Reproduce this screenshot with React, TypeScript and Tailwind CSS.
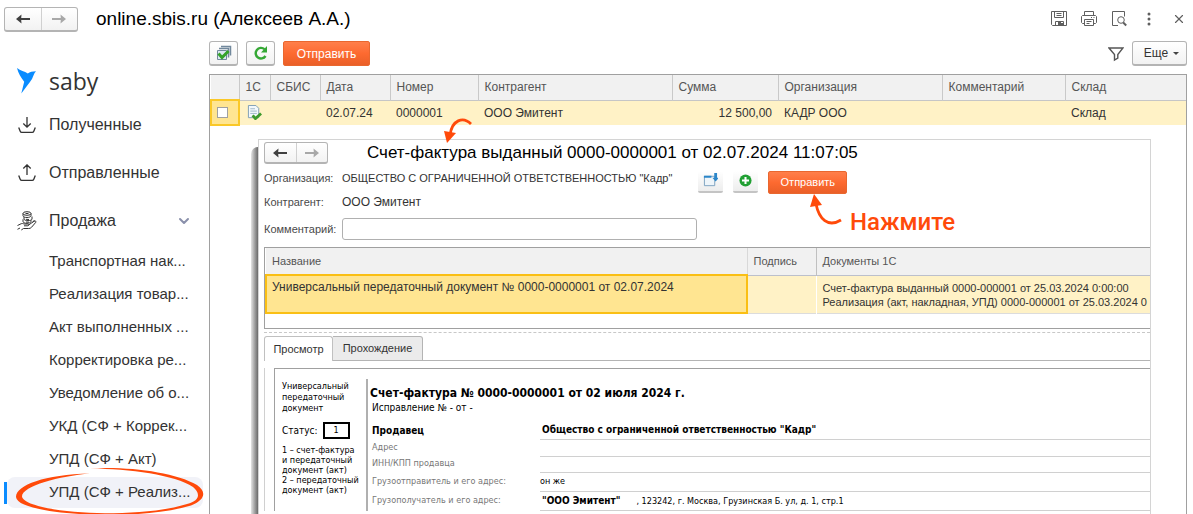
import type { ReactNode } from 'react';
import clsx from 'clsx';
import { ChevronDown, X } from 'lucide-react';

const documentTypes = [
  'Транспортная нак...',
  'Реализация товар...',
  'Акт выполненных ...',
  'Корректировка ре...',
  'Уведомление об о...',
  'УКД (СФ + Коррек...',
  'УПД (СФ + Акт)',
  'УПД (СФ + Реализ...',
];

const columns = [
  { title: '', width: 'w-[28px]' },
  { title: '1С', width: 'w-[31px]' },
  { title: 'СБИС', width: 'w-[50px]' },
  { title: 'Дата', width: 'w-[70px]' },
  { title: 'Номер', width: 'w-[88px]' },
  { title: 'Контрагент', width: '' },
  { title: 'Сумма', width: 'w-[106px]' },
  { title: 'Организация', width: 'w-[164px]' },
  { title: 'Комментарий', width: 'w-[123px]' },
  { title: 'Склад', width: 'w-[121px]' },
];

const parties = [
  { label: 'Адрес', value: '', height: 'h-[17px]' },
  { label: 'ИНН/КПП продавца', value: '', height: 'h-[16px]' },
  { label: 'Грузоотправитель и его адрес:', value: 'он же', height: 'h-[19px]' },
];

const Arrow = ({ back }: { back?: boolean }) => (
  <svg
    viewBox="0 0 14 10"
    className={clsx('h-[10px] w-[14px]', back ? 'text-[#404040]' : 'rotate-180 text-[#a8a8a8]')}
  >
    <path d="M0 5 5.5 0.4 5.2 3.9H14V6.1H5.2L5.5 9.6Z" fill="currentColor" />
  </svg>
);

const HistoryButtons = ({ small }: { small?: boolean }) => (
  <div
    className={clsx(
      'flex shrink-0 divide-x divide-[#d0d0d0] rounded-[3px] border border-b-2 border-[#b4b4b4] bg-gradient-to-b from-white to-[#f2f2f2]',
      small ? 'h-[22px] w-16' : 'h-[25px] w-[74px]'
    )}
  >
    <button aria-label="Назад" className="flex flex-1 items-center justify-center">
      <Arrow back />
    </button>
    <button aria-label="Вперед" className="flex flex-1 items-center justify-center">
      <Arrow />
    </button>
  </div>
);

const SendButton = ({ className }: { className: string }) => (
  <button
    className={clsx(
      'rounded-[2px] border border-[#e9672f] bg-gradient-to-b from-[#ff7f4a] via-[#fd6a30] to-[#ea5f28] text-white',
      className
    )}
  >
    Отправить
  </button>
);

const ToolButton = ({ label, children }: { label: string; children: ReactNode }) => (
  <button
    aria-label={label}
    className="flex h-[25px] w-[29px] items-center justify-center rounded-[3px] border border-b-2 border-[#b4b4b4] bg-gradient-to-b from-white to-[#f2f2f2]"
  >
    {children}
  </button>
);

const TopIcons = () => (
  <div className="flex items-center gap-[14px] text-[#5f5f5f]">
    <button aria-label="Сохранить">
      <svg viewBox="0 0 16 16" className="size-4" fill="none" stroke="currentColor">
        <path d="M.5.5h15v14h-14l-1-1zM3.500.5v6h9v-6M5.500 2.500h5M5.500 4.500h5M4.500 14.500v-4h8v4" />
        <path d="M7 11h3v1h2v2H7z" fill="currentColor" stroke="none" />
      </svg>
    </button>
    <button aria-label="Печать">
      <svg viewBox="0 0 16 16" className="size-4" fill="none" stroke="currentColor">
        <path d="M3.5 4.5v-4h9v4M3.5 12.5h-2l-1-1v-6l1-1h13l1 1v6l-1 1h-2M3.5 8.5h9v6h-9zM5.5 10.500h5M5.5 12.500h3M10 6.5h1M12.5 6.5h1" />
      </svg>
    </button>
    <button aria-label="Просмотр документа">
      <svg viewBox="0 0 16 16" className="size-4" fill="none" stroke="currentColor">
        <path d="M7 14.5H1.5V.5h12v5" />
        <circle cx="10" cy="9" r="3.3" />
        <path d="m12.2 11.500 3 3" strokeWidth="2" />
      </svg>
    </button>
    <button aria-label="Меню">
      <svg viewBox="0 0 16 16" className="size-4" fill="currentColor">
        <circle cx="8" cy="3" r="1.5" />
        <circle cx="8" cy="8" r="1.5" />
        <circle cx="8" cy="13" r="1.5" />
      </svg>
    </button>
    <button aria-label="Закрыть">
      <X className="mx-px size-[14px]" strokeWidth={2} />
    </button>
  </div>
);

const CoinsInHand = () => (
  <svg viewBox="0 0 20 20" className="size-5" fill="none" stroke="currentColor" strokeWidth="1">
    <ellipse cx="10" cy="2.5" rx="4" ry="1.8" />
    <path d="M6 2.5v2.2c0 1 1.800 1.800 4 1.800s4-.8 4-1.800V2.500M7 6v2c0 1 1.800 1.600 4 1.600s4-.6 4-1.600V5.500M6 8.300v2.200c0 1 1.800 1.800 4 1.800s4-.8 4-1.800V9.300M8.500 2.500h3M9 8.300l3 .2M9 11l3 .2" />
    <path d="M.5 14.500 4 12.800c1-.5 2-.3 3 .2h3.500c1.300 0 1.300 1.800 0 1.800H7M11 14.500l5-3.600c2.200-1.300 3.500-.8 2.800.4l-4.300 5c-.8.900-1.700 1.200-2.800 1.200H6.500L4.300 19M.5 18.300 3 17" />
    <path d="M15.500 11.500 17.500 9" />
  </svg>
);

const Sidebar = () => (
  <nav className="w-[209px] shrink-0 text-[15px] text-[#333]">
    <a href="#home" className="ml-4 mt-[27px] flex h-8 items-center gap-3">
      <svg viewBox="0 0 21 26" className="h-[26px] w-[21px] text-[#0a8cff]" fill="currentColor">
        <path d="M1 0C4.500 3 8.500 3.200 11.800 5.500 13.800 4 16.500 3.500 20 3.300 17.600 5.700 17.600 8 16 11 13 16 9 20 5.300 25.600L8.200 13.800C5 9.500 2.200 5 1 0Z" />
      </svg>
      <span className="font-['Open_Sans',sans-serif] text-[23px] leading-7">saby</span>
    </a>
    <a href="#inbox" className="ml-[18px] mt-1 flex h-12 items-center gap-[13px] text-base">
      <svg viewBox="0 0 18 18" className="size-[18px]" fill="none" stroke="currentColor" strokeWidth="1.3">
        <path d="M.7 11.500l1.500 3.700c.3.800.8 1.100 1.600 1.100h10.400c.8 0 1.300-.3 1.600-1.100l1.500-3.700M9 1v10M5.300 7.500 9 11.200l3.700-3.700" />
      </svg>
      Полученные
    </a>
    <a href="#outbox" className="ml-[18px] flex h-12 items-center gap-[13px] text-base">
      <svg viewBox="0 0 18 18" className="size-[18px]" fill="none" stroke="currentColor" strokeWidth="1.3">
        <path d="M.7 11.500l1.500 3.700c.3.800.8 1.100 1.600 1.100h10.400c.8 0 1.300-.3 1.600-1.100l1.500-3.700M9 11V1M5.300 4.500 9 .9l3.700 3.600" />
      </svg>
      Отправленные
    </a>
    <button className="flex h-12 w-full items-center px-[17px] text-base">
      <CoinsInHand />
      <span className="ml-3 flex-1 text-left">Продажа</span>
      <ChevronDown className="size-4 text-[#8a90ab]" strokeWidth={3} />
    </button>
    <ul>
      {documentTypes.map((title, i) => {
        const active = i === documentTypes.length - 1;
        return (
          <li key={title} className="flex h-[33px] items-center pl-1">
            <span className={clsx('h-[22px] w-[3px]', active && 'bg-[#0a8cff]')} />
            <a
              href="#documents"
              className={clsx(
                'relative mr-[6px] flex h-[31px] flex-1 items-center whitespace-nowrap rounded-lg pl-[42px]',
                active && 'bg-[#f1f2f8]'
              )}
            >
              {title}
              {active && (
                <svg
                  viewBox="0 0 190 50"
                  className="absolute -top-[10px] left-[8px] h-[50px] w-[190px]"
                  fill="#ff4a0a"
                >
                  <path d="M75 1.500C112-1 160 5 182 18c10 7 8 15-6 20.500C150 46 120 48 90 48 50 47.500 2 42 1 30 1 18 30 7.500 75 6.500 45 9 7 19 7 29.500 8 39 50 46 90 46.200c30 0 60-2.200 82-9.200 14-4 13-11 6-17C160 8 115 1.800 75 1.500Z" />
                </svg>
              )}
            </a>
          </li>
        );
      })}
    </ul>
  </nav>
);

const StatusIcon = () => (
  <svg viewBox="0 0 16 16" className="size-[15px]">
    <path d="M1.500.5h8l3 3v10h-11z" fill="#f3f8fb" stroke="#7c9cb3" />
    <path d="M3.500 4h5M3.500 6.500h7M3.500 9h7" stroke="#9db6c8" />
    <path d="m6 11 3 3.500L15 9" fill="none" stroke="#3d9a2c" strokeWidth="3" />
  </svg>
);

const RegistryTable = () => (
  <table className="w-full table-fixed text-left text-xs text-[#333]">
    <thead>
      <tr className="h-[25px] border-b border-[#c6c6c6] bg-[#f1f1f1] text-[#555]">
        {columns.map((column) => (
          <th
            key={column.title}
            className={clsx('border-r border-[#c9c9c9] px-[6px] font-normal last:border-r-0', column.width)}
          >
            {column.title}
          </th>
        ))}
      </tr>
    </thead>
    <tbody>
      <tr className="h-[25px] bg-[#fff2c6]">
        <td className="border-2 border-[#fac828] bg-[#ffe591] px-[5px]">
          <input
            type="checkbox"
            aria-label="Выбрать документ"
            className="block size-[11px] appearance-none border border-[#a0a0a0] bg-white"
          />
        </td>
        <td className="px-[7px]">
          <StatusIcon />
        </td>
        <td />
        <td className="px-[6px]">02.07.24</td>
        <td className="px-[6px]">0000001</td>
        <td className="px-[6px]">ООО Эмитент</td>
        <td className="px-[6px] text-right">12 500,00</td>
        <td className="px-[6px]">КАДР ООО</td>
        <td />
        <td className="px-[6px]">Склад</td>
      </tr>
    </tbody>
  </table>
);

const SmallButton = ({ label, children }: { label: string; children: ReactNode }) => (
  <button
    aria-label={label}
    className="flex h-[22px] w-[25px] items-center justify-center rounded-[2px] border-b-2 border-[#c4c4c4] bg-gradient-to-b from-white to-[#ededed]"
  >
    {children}
  </button>
);

const InvoiceForm = () => (
  <div className="text-[11px] text-[#4a4a4a]">
    <div className="flex h-6 items-center">
      <span className="w-[78px]">Организация:</span>
      <span className="text-[#333]">ОБЩЕСТВО С ОГРАНИЧЕННОЙ ОТВЕТСТВЕННОСТЬЮ "Кадр"</span>
      <div className="ml-[26px] mt-2 flex gap-[10px]">
        <SmallButton label="Открыть в окне">
          <svg viewBox="0 0 16 16" className="size-[15px]">
            <path d="M1.500 3.500h11v10h-11z" fill="#eef5fa" stroke="#7ba0be" />
            <path d="M1 3h8v2H1zM12 0h3v5h2l-3.500 4L10 5h2z" fill="#2b86c9" />
          </svg>
        </SmallButton>
        <SmallButton label="Добавить">
          <svg viewBox="0 0 14 14" className="size-[13px]">
            <circle cx="7" cy="7" r="6.5" fill="#21a033" />
            <path d="M7 3.200v7.600M3.200 7h7.600" stroke="#fff" strokeWidth="2.2" />
          </svg>
        </SmallButton>
        <SendButton className="h-[23px] w-[79px]" />
      </div>
    </div>
    <div className="flex h-6 items-center">
      <span className="w-[78px]">Контрагент:</span>
      <span className="text-xs text-[#333]">ООО Эмитент</span>
    </div>
    <div className="mt-[3px] flex h-6 items-center">
      <label htmlFor="comment" className="w-[78px]">
        Комментарий:
      </label>
      <input
        id="comment"
        type="text"
        className="h-[22px] w-[355px] rounded-[3px] border border-[#b0b0b0] bg-white px-1 outline-none"
      />
    </div>
  </div>
);

const AttachmentsTable = () => (
  <div className="mt-[6px] h-[82px] overflow-hidden border-y border-l border-[#a0a0a0]">
    <table className="w-full table-fixed text-left text-[11px] leading-[14px] text-[#333]">
      <thead>
        <tr className="h-[27px] border-b border-[#bcc0cc] bg-[#f1f1f1] text-[#555]">
          <th className="w-[481px] border-r border-[#d8d8d8] px-[6px] font-normal">Название</th>
          <th className="w-[69px] border-r border-[#c0c0c0] px-[6px] font-normal">Подпись</th>
          <th className="px-[6px] font-normal">Документы 1С</th>
        </tr>
      </thead>
      <tbody>
        <tr className="h-[38px] border-b border-[#dcdcdc] bg-[#fff2c6] align-top">
          <td className="border-2 border-[#fabf14] bg-[#ffe591] px-[5px] pt-1 text-xs leading-[14px]">
            Универсальный передаточный документ № 0000-0000001 от 02.07.2024
          </td>
          <td className="border-r border-white" />
          <td className="whitespace-nowrap px-[6px] pt-[5px]">
            Счет-фактура выданный 0000-000001 от 25.03.2024 0:00:00
            <br />
            Реализация (акт, накладная, УПД) 0000-000001 от 25.03.2024 0
          </td>
        </tr>
      </tbody>
    </table>
  </div>
);

const InvoicePreview = () => (
  <article className="ml-[9px] mt-[7px] flex border-l border-t border-[#a0a0a0] pl-[7px] pt-[10px] font-['DejaVu_Sans_Condensed','DejaVu_Sans',sans-serif] text-[9px] text-black">
    <div className="w-[84px] shrink-0 whitespace-nowrap leading-[11px]">
      <p className="pt-[2px]">
        Универсальный
        <br />
        передаточный
        <br />
        документ
      </p>
      <p className="mt-2 flex items-center gap-[5px]">
        <span className="text-[10px]">Статус:</span>
        <span className="flex h-[17px] w-[27px] items-center justify-center border-2 border-black">1</span>
      </p>
      <p className="mt-[6px] leading-[10px]">
        1 – счет-фактура
        <br />
        и передаточный
        <br />
        документ (акт)
        <br />
        2 – передаточный
        <br />
        документ (акт)
      </p>
    </div>
    <div className="flex-1 border-l-2 border-[#b0b0b0] pl-[2px]">
      <h2 className="mt-[6px] text-xs leading-4 font-bold">Счет-фактура № 0000-0000001 от 02 июля 2024 г.</h2>
      <p className="pl-[2px] text-[10px] leading-[14px]">Исправление № - от -</p>
      <table className="mt-[6px] w-full table-fixed text-left">
        <tbody>
          <tr className="h-[18px] text-[10px]">
            <th className="w-[170px] pl-[2px] font-bold">Продавец</th>
            <td className="border-b border-[#d0d0d0] pl-[2px] font-bold">
              Общество с ограниченной ответственностью "Кадр"
            </td>
          </tr>
          {parties.map(({ label, value, height }) => (
            <tr key={label} className={height}>
              <th className="pl-[2px] font-normal text-[#777]">{label}</th>
              <td className="border-b border-[#d0d0d0]">{value}</td>
            </tr>
          ))}
          <tr className="h-[19px]">
            <th className="pl-[2px] font-normal text-[#777]">Грузополучатель и его адрес:</th>
            <td className="border-b border-[#d0d0d0] pl-[2px]">
              <b className="mr-4 text-[10px]">"ООО Эмитент"</b>, 123242, г. Москва, Грузинская Б. ул, д. 1, стр.1
            </td>
          </tr>
        </tbody>
      </table>
    </div>
  </article>
);

const InvoiceWindow = () => (
  <section className="relative ml-[41px] mr-[35px] mt-[13px] flex flex-1">
    <div className="mt-2 w-[7px] shrink-0 rounded-tl-lg bg-gradient-to-r from-[#e4e4e4] to-[#6a6a6a]" />
    <div className="min-w-0 flex-1 border-x border-t border-[#d4d4d4] bg-white pl-[5px]">
      <header className="flex h-[26px] items-center gap-[39px] text-[17px] text-black">
        <HistoryButtons small />
        <h1>Счет-фактура выданный 0000-0000001 от 02.07.2024 11:07:05</h1>
      </header>
      <InvoiceForm />
      <AttachmentsTable />
      <div className="mt-[3px] border-t border-dashed border-[#c8c8c8]" />
      <div role="tablist" className="mt-[3px] flex h-[25px] text-[11px] text-[#333]">
        <button role="tab" aria-selected="true" className="w-[69px] rounded-t-[3px] border border-b-0 border-[#c0c0c0]">
          Просмотр
        </button>
        <button role="tab" aria-selected="false" className="w-[90px] rounded-tr-[3px] border border-l-0 border-[#b4b4b4] bg-[#ebebeb]">
          Прохождение
        </button>
        <span className="flex-1 border-b border-[#b4b4b4]" />
      </div>
      <div className="border-l border-[#d0d0d0]">
        <InvoicePreview />
      </div>
    </div>

    {/* hints drawn over the window */}
    <svg viewBox="0 0 30 28" className="absolute -top-[22px] left-[192px] h-7 w-[30px]">
      <path d="M28 7C20-1 9 3 7 18" fill="none" stroke="#ff4a0a" strokeWidth="2.8" />
      <path d="M1 14 13 16 4 26Z" fill="#ff4a0a" />
    </svg>
    <div className="absolute left-[559px] top-[55px] flex text-[#ff4a0a]">
      <svg viewBox="0 0 34 34" className="h-[34px] w-[34px]">
        <path d="M6 10C9 25 18 34 31 26" fill="none" stroke="#ff4a0a" strokeWidth="2.8" />
        <path d="M4 0 12 11 0 13Z" fill="#ff4a0a" />
      </svg>
      <span className="ml-[6px] mt-3 font-['Roboto',sans-serif] text-2xl leading-8 font-medium">Нажмите</span>
    </div>
  </section>
);

export default function App() {
  return (
    <div className="flex min-h-screen flex-col bg-white font-['Liberation_Sans',Arial,sans-serif]">
      <header className="flex h-[38px] items-center justify-between pl-1 pr-[6px]">
        <div className="flex items-center gap-[18px]">
          <HistoryButtons />
          <h1 className="text-[19px] text-black">online.sbis.ru (Алексеев А.А.)</h1>
        </div>
        <TopIcons />
      </header>
      <div className="flex flex-1">
        <Sidebar />
        <main className="flex min-w-0 flex-1 flex-col pr-[6px]">
          <div className="mt-[3px] flex items-center gap-2">
            <ToolButton label="Отметить все">
              <svg viewBox="0 0 16 16" className="size-4">
                <path d="M5 1.500h9.500v9M3 3.500h9.500v9" fill="none" stroke="#71889c" strokeWidth="1.5" />
                <path d="M1.500 5.500h9v9h-9z" fill="#dce8f2" stroke="#71889c" />
                <path d="m2.500 8.500 3.500 4L12.500 6" fill="none" stroke="#35a32b" strokeWidth="3" />
              </svg>
            </ToolButton>
            <ToolButton label="Обновить">
              <svg viewBox="0 0 16 16" className="size-4">
                <path d="M12.500 11A5.300 5.300 0 1 1 11.500 4.200" fill="none" stroke="#35a835" strokeWidth="2.4" />
                <path d="M14 1v6.500H8Z" fill="#35a835" />
              </svg>
            </ToolButton>
            <SendButton className="h-[25px] w-[87px] text-xs" />
            <button aria-label="Фильтр" className="ml-auto text-[#555]">
              <svg viewBox="0 0 16 16" className="size-4" fill="none" stroke="currentColor" strokeWidth="1.4">
                <path d="M1 2h14L9.800 8.500v3.700L6.500 14V8.500L1 2Z" />
              </svg>
            </button>
            <button className="flex h-[25px] w-[55px] items-center justify-center gap-[5px] rounded-[3px] border border-b-2 border-[#b4b4b4] bg-gradient-to-b from-white to-[#f2f2f2] pl-1 text-xs text-[#333]">
              Еще
              <span className="mt-px border-x-[3px] border-t-[3px] border-x-transparent border-t-[#444]" />
            </button>
          </div>
          <div className="mt-2 flex flex-1 flex-col border-x border-t border-[#a0a0a0]">
            <RegistryTable />
            <InvoiceWindow />
          </div>
        </main>
      </div>
    </div>
  );
}
